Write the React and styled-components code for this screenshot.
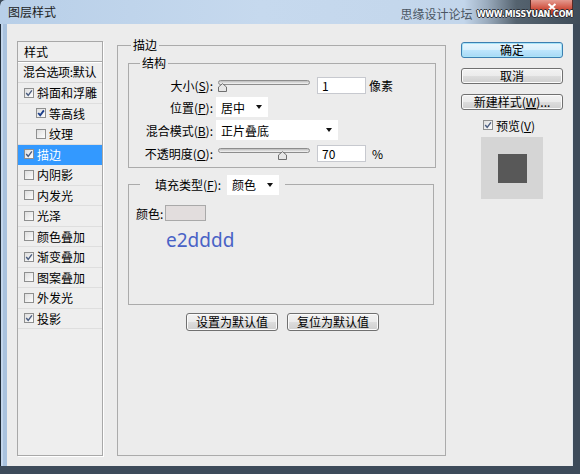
import React from 'react';
import styled, { createGlobalStyle } from 'styled-components';

const layers = [
  { name: '斜面和浮雕', checked: true },
  { name: '等高线', checked: true, indent: true, focus: true },
  { name: '纹理', checked: false, indent: true },
  { name: '描边', checked: true, selected: true },
  { name: '内阴影', checked: false },
  { name: '内发光', checked: false },
  { name: '光泽', checked: false },
  { name: '颜色叠加', checked: false },
  { name: '渐变叠加', checked: true },
  { name: '图案叠加', checked: false },
  { name: '外发光', checked: false },
  { name: '投影', checked: true },
];

const CheckBox = ({ checked, focus }) => (
  <Box>
    <svg width="10" height="10" viewBox="0 0 10 10">
      <defs>
        <linearGradient id="cbg" x1="0" y1="0" x2="1" y2="1">
          <stop offset="0" stopColor="#dcdcdc" />
          <stop offset="1" stopColor="#ffffff" />
        </linearGradient>
      </defs>
      <rect x="0.5" y="0.5" width="9" height="9" fill="url(#cbg)" stroke="#8e8f8f" />
      {checked && (
        <path
          d="M2.2 5 L4.2 7.3 L7.9 2.4"
          fill="none"
          stroke={focus ? '#1d3f8a' : '#4a5d80'}
          strokeWidth={focus ? 1.9 : 1.4}
        />
      )}
    </svg>
  </Box>
);

const Thumb = () => (
  <svg width="9" height="9" viewBox="0 0 9 9">
    <path d="M0.5 8.5 V4 L4.5 0.6 L8.5 4 V8.5 Z" fill="#e6e6e6" stroke="#6f6f6f" />
  </svg>
);

const Slider = ({ pos }) => (
  <SliderBox>
    <Track />
    <ThumbWrap style={{ left: pos }}>
      <Thumb />
    </ThumbWrap>
  </SliderBox>
);

const Dropdown = ({ width, children }) => (
  <Select $w={width}>
    <span>{children}</span>
    <Arrow />
  </Select>
);

const App = () => {
  return (
    <>
      <GlobalStyle />
      <Window>
        <TitleBar>
          <Title>图层样式</Title>
          <CloseBtn>
            <svg width="10" height="8" viewBox="0 0 10 8">
              <path d="M1.5 1 L8.5 7 M8.5 1 L1.5 7" stroke="#ffffff" strokeWidth="2" />
            </svg>
          </CloseBtn>
          <Watermark>
            <WatermarkCn>思缘设计论坛</WatermarkCn>
            <Url>WWW.MISSYUAN.COM</Url>
          </Watermark>
        </TitleBar>
        <Body>
          <LayerList>
            <ListHeader>样式</ListHeader>
            <BlendRow>混合选项:默认</BlendRow>
            {layers.map((l) => (
              <LayerRow key={l.name} $indent={l.indent} $selected={l.selected}>
                <CheckBox checked={l.checked} focus={l.focus} />
                <span>{l.name}</span>
              </LayerRow>
            ))}
          </LayerList>

          <MainGroup>
            <Legend $ml={3}>描边</Legend>
            <StructGroup>
              <Legend $ml={11}>结构</Legend>
              <Row $h={20}>
                <Label>大小(<u>S</u>):</Label>
                <Slider pos={0} />
                <NumInput>1</NumInput>
                <Unit $ml={3}>像素</Unit>
              </Row>
              <Row $h={22}>
                <Label>位置(<u>P</u>):</Label>
                <Dropdown width={52}>居中</Dropdown>
              </Row>
              <Row $h={22}>
                <Label>混合模式(<u>B</u>):</Label>
                <Dropdown width={122}>正片叠底</Dropdown>
              </Row>
              <Row $h={22}>
                <Label>不透明度(<u>O</u>):</Label>
                <Slider pos={60} />
                <NumInput>70</NumInput>
                <Unit $ml={6}>%</Unit>
              </Row>
            </StructGroup>

            <FillGroup>
              <FillLegend>
                <span>填充类型(<u>F</u>):</span>
                <Dropdown width={52}>颜色</Dropdown>
              </FillLegend>
              <ColorRow>
                <span>颜色:</span>
                <Swatch />
              </ColorRow>
              <HexText>e2dddd</HexText>
            </FillGroup>

            <ButtonRow>
              <PushButton $w={92} $h={18}>设置为默认值</PushButton>
              <PushButton $w={92} $h={18}>复位为默认值</PushButton>
            </ButtonRow>
          </MainGroup>

          <SideColumn>
            <PushButton $primary>确定</PushButton>
            <PushButton $mt={10}>取消</PushButton>
            <PushButton $mt={10}>
              <span>新建样式(<u>W</u>)...</span>
            </PushButton>
            <PreviewRow>
              <CheckBox checked />
              <span>预览(<u>V</u>)</span>
            </PreviewRow>
            <PreviewBox>
              <PreviewSquare />
            </PreviewBox>
          </SideColumn>
        </Body>
      </Window>
    </>
  );
};

export default App;

const GlobalStyle = createGlobalStyle`
  html, body {
    margin: 0;
    padding: 0;
    background: #3d4b5a;
  }
  body {
    font-family: "Noto Sans CJK SC", "Noto Sans", sans-serif;
    font-size: 12px;
    color: #000;
  }
  * {
    box-sizing: border-box;
  }
`;

const Window = styled.div`
  width: 580px;
  height: 474px;
  display: flex;
  flex-direction: column;
  overflow: hidden;
  border-radius: 6px 6px 0 0;
  background:
    linear-gradient(#3d4b5a, #3d4b5a) bottom / 100% 8px no-repeat,
    linear-gradient(to right, #1f2b37 0 1px, #c3d6ec 1px 3px, #a9c2de 3px 7px, #3d4b5a 7px 572px, #e0e6ec 572px 573px, #3d4b5a 573px);
`;

const TitleBar = styled.div`
  position: relative;
  height: 24px;
  flex: none;
  display: flex;
  align-items: center;
  padding-left: 8px;
  background: linear-gradient(
    to right,
    #b8cfe8 0%,
    #c6d9ee 45%,
    #c3d6eb 80%,
    #9aabbd 84%,
    #55636f 89%,
    #3f4c59 100%
  );
`;

const Title = styled.div`
  font-size: 12px;
  line-height: 14px;
  color: #1c1c1c;
`;

const Watermark = styled.div`
  position: relative;
  z-index: 1;
  margin-left: auto;
  padding-right: 7px;
  display: flex;
  align-items: center;
  gap: 4px;
  margin-top: 4px;
`;

const WatermarkCn = styled.span`
  font-size: 12px;
  line-height: 14px;
  color: #4b5663;
`;

const Url = styled.span`
  font-family: "DejaVu Sans", sans-serif;
  font-weight: bold;
  font-size: 8px;
  letter-spacing: -0.2px;
  color: #ffffff;
  text-shadow: 1px 0 0 #2a2f36, -1px 0 0 #2a2f36, 0 1px 0 #2a2f36, 0 -1px 0 #2a2f36;
`;

const CloseBtn = styled.div`
  position: absolute;
  left: 530px;
  top: 0;
  width: 43px;
  height: 17px;
  border-radius: 0 0 4px 4px;
  border: 1px solid #5b2a25;
  border-top: none;
  background: linear-gradient(#e49a8f, #cf4f3d 55%, #b8351f);
  display: flex;
  align-items: flex-start;
  justify-content: center;
  padding-top: 3px;
`;

const Body = styled.div`
  flex: 1;
  margin: 0 8px 8px 7px;
  background: #ececec;
  display: flex;
  align-items: stretch;
  padding: 14px 9px 10px 10px;
`;

const LayerList = styled.div`
  width: 86px;
  margin-top: 3px;
  border: 1px solid #a8a8a8;
  box-shadow: 1px 1px 0 #ffffff;
  background: #eeeeee;
  display: flex;
  flex-direction: column;
`;

const ListHeader = styled.div`
  height: 20px;
  line-height: 19px;
  padding-left: 6px;
  border-bottom: 1px solid #a8a8a8;
  box-shadow: 0 1px 0 #ffffff;
`;

const BlendRow = styled.div`
  height: 21px;
  line-height: 20px;
  padding-left: 5px;
  border-bottom: 1px solid #d6d6d6;
  white-space: nowrap;
  letter-spacing: -0.3px;
`;

const LayerRow = styled.div`
  height: 20.5px;
  display: flex;
  align-items: center;
  gap: 3px;
  padding-left: ${({ $indent }) => ($indent ? 18 : 6)}px;
  background: ${({ $selected }) => ($selected ? '#3399ff' : 'transparent')};
  color: ${({ $selected }) => ($selected ? '#ffffff' : '#000000')};
  border-bottom: 1px solid ${({ $selected }) => ($selected ? '#3399ff' : '#dedede')};
  white-space: nowrap;
`;

const Box = styled.span`
  width: 10px;
  height: 10px;
  display: inline-flex;
  flex: none;
`;

const MainGroup = styled.fieldset`
  width: 329px;
  margin: 0 0 0 14px;
  padding: 4px 9px 0 10px;
  border: 1px solid #ababab;
  min-width: 0;
`;

const Legend = styled.legend`
  margin-left: ${({ $ml }) => $ml}px;
  padding: 0 2px;
  font-size: 12px;
  line-height: 14px;
`;

const StructGroup = styled.fieldset`
  width: 308px;
  margin: 0;
  padding: 5px 0 2px 0;
  border: 1px solid #ababab;
  min-width: 0;
`;

const Row = styled.div`
  height: ${({ $h }) => $h}px;
  display: flex;
  align-items: center;
  margin-bottom: 1px;
`;

const Label = styled.div`
  width: 84px;
  margin-right: 3px;
  text-align: right;
  white-space: nowrap;
  flex: none;
`;

const SliderBox = styled.div`
  position: relative;
  width: 92px;
  height: 16px;
  margin-left: 2px;
  margin-right: 7px;
  flex: none;
`;

const Track = styled.div`
  position: absolute;
  left: 0;
  right: 0;
  top: 3px;
  height: 5px;
  border-radius: 3px;
  border: 1px solid #8d8d8d;
  background: linear-gradient(#bdbdbd, #f4f4f4);
`;

const ThumbWrap = styled.div`
  position: absolute;
  top: 6px;
  width: 9px;
  height: 9px;
  display: flex;
`;

const NumInput = styled.div`
  width: 49px;
  height: 17px;
  background: #ffffff;
  border: 1px solid #c7c9cf;
  padding-left: 4px;
  line-height: 15px;
  flex: none;
`;

const Unit = styled.span`
  margin-left: ${({ $ml }) => $ml}px;
`;

const Select = styled.div`
  width: ${({ $w }) => $w}px;
  height: 20px;
  background: #ffffff;
  display: flex;
  align-items: center;
  justify-content: space-between;
  padding: 0 6px 0 5px;
  flex: none;
`;

const Arrow = styled.span`
  width: 0;
  height: 0;
  border-left: 3.5px solid transparent;
  border-right: 3.5px solid transparent;
  border-top: 4px solid #111111;
`;

const FillGroup = styled.fieldset`
  width: 306px;
  height: 131px;
  margin: 6px 0 0 0;
  padding: 0 0 0 7px;
  border: 1px solid #ababab;
  min-width: 0;
`;

const FillLegend = styled.legend`
  margin-left: 4px;
  padding: 0 6px 0 15px;
  height: 21px;
  display: flex;
  align-items: center;
  gap: 6px;
  font-size: 12px;
`;

const ColorRow = styled.div`
  height: 16px;
  margin-top: 10px;
  display: flex;
  align-items: center;
  gap: 2px;
`;

const Swatch = styled.div`
  width: 41px;
  height: 16px;
  border: 1px solid #a9a9a9;
  background: #e2dddd;
`;

const HexText = styled.div`
  margin: 7px 0 0 30px;
  font-family: "Noto Sans", "Open Sans", sans-serif;
  font-size: 19px;
  line-height: 24px;
  color: #4862c6;
`;

const ButtonRow = styled.div`
  display: flex;
  gap: 9px;
  margin: 8px 0 0 58px;
`;

const PushButton = styled.div`
  width: ${({ $w }) => ($w ? `${$w}px` : 'auto')};
  height: ${({ $h }) => $h || 16}px;
  margin-top: ${({ $mt }) => $mt || 0}px;
  border: 1px solid ${({ $primary }) => ($primary ? '#3c7fb1' : '#707070')};
  border-radius: 3px;
  box-shadow: ${({ $primary }) => ($primary ? 'inset 0 0 0 1px #a8e4f8' : 'inset 0 0 0 1px #fbfbfb')};
  background: ${({ $primary }) =>
    $primary
      ? 'linear-gradient(#eaf6fd 0%, #d9f0fc 50%, #bee6fd 51%, #a7d9f5 100%)'
      : 'linear-gradient(#f2f2f2 0%, #ebebeb 50%, #dddddd 51%, #cfcfcf 100%)'};
  display: flex;
  align-items: center;
  justify-content: center;
  font-size: 12px;
  line-height: 14px;
  white-space: nowrap;
  flex: none;
`;

const SideColumn = styled.div`
  width: 102px;
  margin: 4px 0 0 15px;
  display: flex;
  flex-direction: column;
`;

const PreviewRow = styled.div`
  height: 14px;
  margin-top: 8px;
  display: flex;
  align-items: center;
  justify-content: center;
  gap: 3px;
  padding-right: 6px;
`;

const PreviewBox = styled.div`
  width: 62px;
  height: 62px;
  margin-top: 5px;
  align-self: center;
  background: #d5d5d5;
  display: flex;
  align-items: center;
  justify-content: center;
`;

const PreviewSquare = styled.div`
  width: 29px;
  height: 29px;
  background: #585858;
`;
